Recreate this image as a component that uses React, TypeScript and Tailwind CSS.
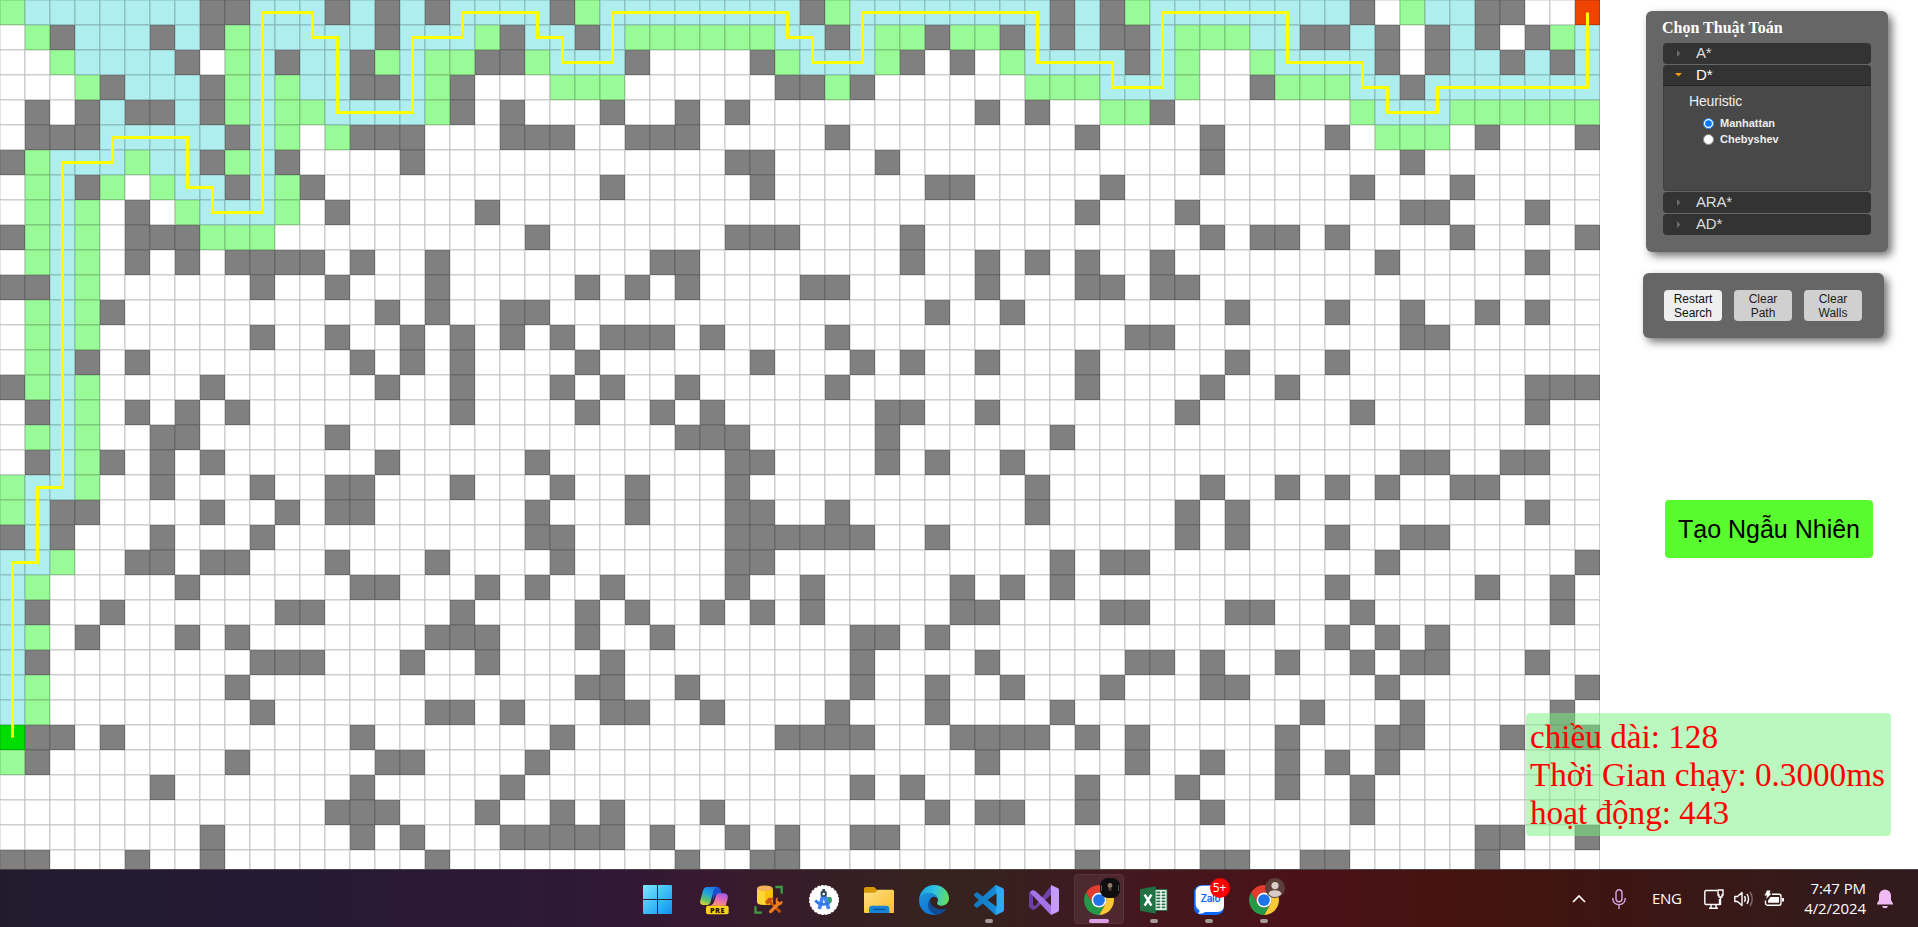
import React from "react";

const ROWS = [
  "gbbbbbbb##bbb#b#" + "b#bbbb#gbbbbbbbb" + "#gbbbbbbbb#b#gbb" + "bbbbbb#.gbb##..E",
  ".g#bbb#b#gbbbbb#" + "bbbg#bb#bggggggb" + "b#bgg#gg#b#b##bg" + "ggbb##b#.#b#.#gb",
  "..gbbbb#.gb#bb#g" + "bgg##gbbb#....#g" + "bbbg#.#.gbbbb#bg" + "..gbbbb#.#bb#b#b",
  "...g#bbb#gbgbb##" + "bg#...ggg......#" + "#g#......gggbbbg" + "..#gggbb#bbbbbbb",
  ".#.#b##b#gbggbbb" + "bg#.#...#..#.#.." + ".......#.#..gg#." + "......gbbbgggggg",
  ".###bbbbb#bg.g##" + "#...###..###...." + ".#.........#...." + "#....#.ggg.#...#",
  "#gbbbgbb#gb#...." + "#............##." + "...#............" + "#.......#.......",
  ".gb#g.gbb#bg#..." + "........#.....#." + ".....##.....#..." + "......#...#.....",
  ".gbg.#.gbbbg.#.." + "...#............" + "...........#...#" + "........##...#..",
  "#gbg.###ggg....." + ".....#.......###" + "....#..........." + "#.##.#....#....#",
  ".gbg.#.#.####.#." + ".#........##...." + "....#..#.#.#..#." + ".......#.....#..",
  "##bg......#..#.." + ".#.....#.#.#...." + "##.....#...##.##" + "................",
  ".gbg#..........#" + ".#..##.........." + ".....#..#......." + ".#...#..#..#.#..",
  ".gbg......#..#.." + "#.#.#.#.###.#..." + ".#...........##." + "........##......",
  ".gb#.#........#." + "#.#....#......#." + "..#.#..#...#...." + ".#...#..........",
  "#gbg....#......#" + "..#...#.#..#...." + ".#.........#...." + "#..#.........###",
  ".#bg.#.#.#......" + "..#....#..#.#..." + "...##..#.......#" + "......#......#..",
  ".gbg..##.....#.." + "...........###.." + "...#......#....." + "................",
  ".#bg#.#.#......#" + ".....#.......##." + "...#.#..#......." + "........##..##..",
  "gbbg..#...#..##." + "..#...#..#...#.." + ".........#......" + "#..#.#.#..##....",
  "gb##....#..#.##." + ".....#...#...##." + ".#.......#.....#" + ".#...........#..",
  "#b#...#...#....." + ".....##......###" + "###..#.........#" + ".#...#..##......",
  "bbg..##.##...#.." + ".#....#......##." + "..........#.##.." + ".......#.......#",
  "bg.....#......##" + "...#.#..#....#.." + "#.....#.#.#....." + ".....#.....#..#.",
  "b#..#......##..." + "..#....#.#..#.#." + "#.....##....##.." + ".##...#.......#.",
  "bg.#...#.#......" + ".###...#..#....." + "..##.#.........." + ".....#.#.#......",
  "b#........###..." + "#..#....#......." + "..#....#.....##." + "#..#..#.##...#..",
  "bg.......#......" + ".......##..#...." + "..#..#..#...#..." + "##.....#.......#",
  "bg........#....." + ".##.#...##..#..." + ".#...#....#....." + "....#...#.....#.",
  "S##.#.........#." + "......#........#" + "###...####.#.#.." + "...#...##...#.##",
  "g#.......#.....#" + "#....#.........." + ".......#.....#.." + "#..#.#.#........",
  "......#.......#." + "....#..........." + "..#.#......#...#" + "...#..#.........",
  ".............###" + "...#..#.#...#..." + ".....#.##..#...." + "#.....#.........",
  "........#.....#." + "#...#####.#..#.#" + "..##............" + "...........##..#",
  "##...#..#......." + ".#.........#..##" + "...........#...." + "##..##.....#....",
];

const CELL: Record<string, string> = {
  ".": "bg-white",
  "#": "bg-[#808080]",
  g: "bg-[#98fb98]",
  b: "bg-[#afeeee]",
  S: "bg-[#00dd00]",
  E: "bg-[#ee4400]",
};

const ROUTE: [number, number][] = [
  [0, 29], [0, 22], [1, 22], [1, 19], [2, 19], [2, 6], [4, 6], [4, 5], [7, 5], [7, 7],
  [8, 7], [8, 8], [10, 8], [10, 0], [12, 0], [12, 1], [13, 1], [13, 4], [16, 4], [16, 1],
  [18, 1], [18, 0], [21, 0], [21, 1], [22, 1], [22, 2], [24, 2], [24, 0], [31, 0], [31, 1],
  [32, 1], [32, 2], [34, 2], [34, 0], [41, 0], [41, 2], [44, 2], [44, 3], [46, 3], [46, 0],
  [51, 0], [51, 2], [54, 2], [54, 3], [55, 3], [55, 4], [57, 4], [57, 3], [63, 3], [63, 0],
];

function Board() {
  return (
    <div className="relative h-[869px] w-[1600px] shrink-0 overflow-hidden">
      <div className="grid grid-cols-[repeat(64,25px)] auto-rows-[25px]">
        {ROWS.flatMap((row, y) =>
          row.split("").map((c, x) => (
            <div
              key={`${x}-${y}`}
              className={`${CELL[c]} shadow-[inset_1px_1px_0_rgba(0,0,0,0.1),inset_-1px_-1px_0_rgba(0,0,0,0.19)]`}
            />
          )),
        )}
      </div>
      <svg className="absolute inset-0" width="1600" height="869">
        <polyline
          points={ROUTE.map(([x, y]) => `${x * 25 + 12.5},${y * 25 + 12.5}`).join(" ")}
          fill="none"
          stroke="#ffff00"
          strokeWidth="3"
        />
      </svg>
    </div>
  );
}

function Header({ label, open = false }: { label: string; open?: boolean }) {
  return (
    <div
      className={`flex h-[21px] items-center bg-[#333333] pl-[11px] text-[15px] leading-[20px] tracking-[-0.2px] ${
        open ? "rounded-t-[4px] border-b border-[#222222] text-white" : "rounded-[4px] text-[#dddddd]"
      }`}
    >
      <span className="flex w-[22px] pl-[1px]">
        {open ? (
          <svg width="7" height="4" viewBox="0 0 7 4">
            <path d="M0 0H7L3.5 3.6Z" fill="#ff9900" />
          </svg>
        ) : (
          <svg className="ml-[2px]" width="4" height="7" viewBox="0 0 4 7">
            <path d="M0 0V7L3.6 3.5Z" fill="#6b6b6b" />
          </svg>
        )}
      </span>
      <span className={open ? "-mt-px" : "-mt-[2px]"}>{label}</span>
    </div>
  );
}

function AlgorithmPanel() {
  return (
    <section className="ml-[46px] mt-[11px] h-[241px] w-[242px] rounded-[6px] bg-[#666666] pl-[17px] pr-[17px] shadow-[4px_4px_8px_rgba(0,0,0,0.55)]">
      <h2 className="-ml-px h-[32px] pt-[7px] font-['Liberation_Serif',serif] text-[16px] font-bold leading-[20px] text-white">
        Chọn Thuật Toán
      </h2>
      <div className="flex flex-col gap-px">
        <Header label="A*" />
        <div>
          <Header label="D*" open />
          <div className="h-[105px] rounded-b-[4px] border border-t-0 border-[#3f3f3f] bg-[#484848] pl-[25px] pt-[6px] text-[#eeeeee]">
            <h3 className="text-[14px] leading-[18px] tracking-[-0.15px]">Heuristic</h3>
            <label className="ml-[14px] mt-[5px] flex h-[16px] items-center text-[11px] font-bold">
              <input type="radio" name="heuristic" defaultChecked className="m-0 mr-[6px] size-[11px]" />
              Manhattan
            </label>
            <label className="ml-[14px] flex h-[17px] items-center text-[11px] font-bold">
              <input type="radio" name="heuristic" className="m-0 mr-[6px] size-[11px]" />
              Chebyshev
            </label>
          </div>
        </div>
        <Header label="ARA*" />
        <Header label="AD*" />
      </div>
    </section>
  );
}

function ControlPanel() {
  return (
    <section className="ml-[43px] mt-[21px] flex h-[65px] w-[241px] gap-[12px] rounded-[6px] bg-[#666666] pl-[21px] pt-[17px] shadow-[4px_4px_8px_rgba(0,0,0,0.55)]">
      <button className="h-[31px] w-[58px] rounded-[4px] bg-[#efefef] text-[12px] leading-[14px] text-[#111111]">
        Restart
        <br />
        Search
      </button>
      <button className="h-[31px] w-[58px] rounded-[4px] bg-[#d0d0d0] text-[12px] leading-[14px] text-[#1c1c1c]">
        Clear
        <br />
        Path
      </button>
      <button className="h-[31px] w-[58px] rounded-[4px] bg-[#d0d0d0] text-[12px] leading-[14px] text-[#1c1c1c]">
        Clear
        <br />
        Walls
      </button>
    </section>
  );
}

function Stats() {
  return (
    <div className="absolute left-[1526px] top-[713px] h-[123px] w-[365px] whitespace-nowrap rounded-[4px] bg-[#78f180]/50 pl-[4px] pt-[5px] font-['Liberation_Serif',serif] text-[33.2px] leading-[38px] text-[#ff0000]">
      <p>chiều dài: 128</p>
      <p>Thời Gian chạy: 0.3000ms</p>
      <p>hoạt động: 443</p>
    </div>
  );
}

function WindowsIcon() {
  return (
    <svg className="relative -left-[1.5px]" width="29" height="29" viewBox="0 0 87 87">
      <defs>
        <linearGradient id="win" x1="0" y1="0" x2="1" y2="1">
          <stop offset="0" stopColor="#7ce9fb" />
          <stop offset="0.5" stopColor="#3fbdf8" />
          <stop offset="1" stopColor="#0f93ee" />
        </linearGradient>
      </defs>
      <path d="M3 0H42V42H0V3Q0 0 3 0ZM45 0H84Q87 0 87 3V42H45ZM0 45H42V87H3Q0 87 0 84ZM45 45H87V84Q87 87 84 87H45Z" fill="url(#win)" />
    </svg>
  );
}

function CopilotIcon() {
  return (
    <svg width="30" height="30" viewBox="0 0 90 90">
      <defs>
        <linearGradient id="cpl" x1="0.6" y1="0" x2="0.2" y2="1">
          <stop offset="0" stopColor="#1b7fe8" />
          <stop offset="0.4" stopColor="#25a8d8" />
          <stop offset="0.7" stopColor="#5cc26a" />
          <stop offset="1" stopColor="#e8d33a" />
        </linearGradient>
        <linearGradient id="cpr" x1="0.7" y1="0" x2="0.3" y2="1">
          <stop offset="0" stopColor="#a05be8" />
          <stop offset="0.5" stopColor="#e36ab4" />
          <stop offset="1" stopColor="#ff9a6a" />
        </linearGradient>
      </defs>
      <path d="M38 5H54Q62 5 65 14L69 26H58Q50 26 47 34L42 48Z" fill="#1c4fd0" />
      <path d="M24 6H54Q46 8 43 19L35 50Q32 60 22 60H12Q1 59 4 46L12 17Q15 6 24 6Z" fill="url(#cpl)" />
      <path d="M60 25H76Q89 27 86 41L80 62H34Q42 60 46 48L50 35Q53 25 60 25Z" fill="url(#cpr)" />
      <rect x="21" y="62" width="68" height="26" rx="6" fill="#fdd116" />
      <text x="55.5" y="82.5" textAnchor="middle" fontFamily="Open Sans, sans-serif" fontWeight="800" fontSize="22" letterSpacing="1.5" fill="#1c1400">
        PRE
      </text>
    </svg>
  );
}

function SqlToolsIcon() {
  return (
    <svg width="30" height="30" viewBox="0 0 90 90">
      <path d="M9 11V51Q9 60 33 60Q56 60 56 51V11Z" fill="#fdd835" />
      <path d="M33 11H56V51Q56 60 33 60Z" fill="#ffc107" />
      <ellipse cx="32.500" cy="10" rx="23.500" ry="8.500" fill="#f3b15a" />
      <path d="M64 6H83V26" fill="none" stroke="#3f9a45" strokeWidth="7" />
      <path d="M4.500 64V83H24" fill="none" stroke="#3f9a45" strokeWidth="7" />
      <path d="M33 51L44 38L60 38L56 46L52 49L82 79L76 85L46 54L40 59Z" fill="#c9530c" />
      <path d="M72 36L70 46L76 51L86 48Q86 60 74 62L52 85Q44 85 45 78L66 56Q62 40 72 36Z" fill="#ee7d22" />
    </svg>
  );
}

function AndroidStudioIcon() {
  return (
    <svg width="30" height="30" viewBox="0 0 90 90">
      <circle cx="45" cy="45" r="43" fill="#ffffff" stroke="#ffffff" strokeWidth="4" strokeDasharray="8 3.3" />
      <path d="M54 36L66 36Q72 46 66 54L56 56Z" fill="#34a06a" />
      <path d="M44 22L31 72M44 22L59 72" stroke="#4285f4" strokeWidth="11" />
      <path d="M19 46Q34 65 62 54" fill="none" stroke="#3478f0" strokeWidth="8" />
      <circle cx="44" cy="26" r="9.500" fill="#33475b" />
      <path d="M40 12H48V22H40Z" fill="#33475b" />
      <circle cx="44" cy="27" r="4" fill="#ffffff" />
    </svg>
  );
}

function FolderIcon() {
  return (
    <svg width="30" height="30" viewBox="0 0 90 90">
      <defs>
        <linearGradient id="fold" x1="0" y1="0" x2="1" y2="1">
          <stop offset="0" stopColor="#ffe083" />
          <stop offset="1" stopColor="#fbbc2c" />
        </linearGradient>
      </defs>
      <path d="M0 12Q0 6 6 6H30L40 15H60V40H0Z" fill="#d69a0c" />
      <path d="M0 23H33L42 14H86Q90 14 90 19V84H4Q0 84 0 80Z" fill="url(#fold)" />
      <path d="M15 84V72Q15 62 25 62H66Q76 62 76 72V84Z" fill="#1683d8" />
      <path d="M30 73H62" stroke="#0b4f92" strokeWidth="4" strokeLinecap="round" />
    </svg>
  );
}

function EdgeIcon() {
  return (
    <svg width="30" height="30" viewBox="0 0 90 90">
      <defs>
        <linearGradient id="edt" x1="0" y1="0.3" x2="1" y2="0.5">
          <stop offset="0" stopColor="#1b9de2" />
          <stop offset="0.5" stopColor="#2fc4df" />
          <stop offset="1" stopColor="#63dd62" />
        </linearGradient>
        <linearGradient id="edb" x1="0" y1="0" x2="0.6" y2="1">
          <stop offset="0" stopColor="#1a95dd" />
          <stop offset="1" stopColor="#1173cf" />
        </linearGradient>
      </defs>
      <path d="M0 46C4 30 16 24 30 24C44 24 56 32 57 42C50 33 38 34 34 42C26 58 38 78 62 82C56 88 50 90 44 90C18 90 0 70 0 46Z" fill="url(#edb)" />
      <path d="M33 42C22 56 26 82 52 89C66 88 78 80 84 69C76 74 66 74 58 72C42 68 32 56 33 42Z" fill="#114b93" />
      <path d="M0 44C2 18 22 0 45 0C70 0 90 18 90 40C90 54 80 62 68 62C58 62 53 58 54 54C59 48 58 36 48 29C32 19 8 24 0 44Z" fill="url(#edt)" />
    </svg>
  );
}

function VSCodeIcon() {
  return (
    <svg width="30" height="30" viewBox="0 0 24 24">
      <defs>
        <linearGradient id="vsc" x1="0" y1="0" x2="1" y2="0">
          <stop offset="0" stopColor="#1479c0" />
          <stop offset="0.7" stopColor="#1787d2" />
          <stop offset="0.76" stopColor="#2aa8f2" />
          <stop offset="1" stopColor="#2badf5" />
        </linearGradient>
      </defs>
      <path
        fill="url(#vsc)"
        d="M23.15 2.587L18.21.21a1.494 1.494 0 0 0-1.705.29l-9.46 8.63-4.12-3.128a.999.999 0 0 0-1.276.057L.327 7.261A1 1 0 0 0 .326 8.74L3.899 12 .326 15.26a1 1 0 0 0 .001 1.479L1.65 17.94a.999.999 0 0 0 1.276.057l4.12-3.128 9.46 8.63a1.492 1.492 0 0 0 1.704.29l4.942-2.377A1.5 1.5 0 0 0 24 20.06V3.939a1.5 1.5 0 0 0-.85-1.352zm-5.146 14.861L10.826 12l7.178-5.448v10.896z"
      />
    </svg>
  );
}

function VisualStudioIcon() {
  return (
    <svg width="30" height="30" viewBox="0 0 90 90">
      <path d="M0 24L10 16L20 22L12 32V58L20 66L10 74L0 66Z" fill="#6a3fa0" />
      <path d="M10 74L68 0V28L26 66Q18 76 10 74Z" fill="#6f44a8" />
      <path d="M10 16Q18 14 26 24L68 64V90L62 86L2 22Z" fill="#a673e6" />
      <path d="M66 0L86 9Q90 11 90 15V75Q90 79 86 81L66 90Z" fill="#c79bfb" />
    </svg>
  );
}

function ChromeIcon() {
  const arm = "M3.2154 12A24 24 0 0 1 44.7846 12H24A12 12 0 0 0 13.6077 30Z";
  return (
    <svg width="30" height="30" viewBox="0 0 48 48">
      <path d={arm} fill="#e33b2e" />
      <path d={arm} fill="#fcc934" transform="rotate(120 24 24)" />
      <path d={arm} fill="#229a48" transform="rotate(240 24 24)" />
      <circle cx="24" cy="24" r="12" fill="#ffffff" />
      <circle cx="24" cy="24" r="9.4" fill="#1f73e8" />
    </svg>
  );
}

function ExcelIcon() {
  return (
    <svg width="30" height="30" viewBox="0 0 90 90">
      <rect x="44" y="14" width="40" height="62" fill="#ffffff" stroke="#207245" strokeWidth="3" />
      {[22, 31, 40, 49, 58, 67].map((y) => (
        <path key={y} d={`M52 ${y}H64M68 ${y}H79`} stroke="#207245" strokeWidth="5" />
      ))}
      <path d="M3 13L50 4V86L3 77Z" fill="#207245" />
      <path d="M17 29L37 62M37 29L17 62" stroke="#ffffff" strokeWidth="7.5" />
    </svg>
  );
}

function ZaloIcon() {
  return (
    <svg width="30" height="30" viewBox="0 0 90 90">
      <rect width="90" height="90" rx="22" fill="#0a68ff" />
      <path d="M24 2H70Q90 2 90 22V60Q90 81 70 81H34Q24 88 12 86Q18 82 16 76Q5 68 5 56V22Q5 2 24 2Z" fill="#ffffff" />
      <text x="49" y="51" textAnchor="middle" fontFamily="Inter, sans-serif" fontWeight="600" fontSize="30" letterSpacing="-1" fill="#0a68ff">
        Zalo
      </text>
    </svg>
  );
}

type App = { name: string; icon: React.ReactNode; mark?: "idle" | "active"; badge?: React.ReactNode };

const APPS: App[] = [
  { name: "start", icon: <WindowsIcon /> },
  { name: "copilot", icon: <CopilotIcon /> },
  { name: "sql", icon: <SqlToolsIcon /> },
  { name: "android", icon: <AndroidStudioIcon /> },
  { name: "files", icon: <FolderIcon /> },
  { name: "edge", icon: <EdgeIcon /> },
  { name: "code", icon: <VSCodeIcon />, mark: "idle" },
  { name: "vs", icon: <VisualStudioIcon /> },
  {
    name: "chrome",
    icon: <ChromeIcon />,
    mark: "active",
    badge: (
      <svg width="20" height="20" viewBox="0 0 20 20">
        <rect width="20" height="20" rx="8" fill="#0e0e10" />
        <circle cx="10" cy="7.5" r="2.4" fill="#9a7868" />
        <path d="M8 10H12L11 13H9Z" fill="#4a3a34" />
        <path d="M1.5 7V13M18.5 7V13" stroke="#555555" />
      </svg>
    ),
  },
  { name: "excel", icon: <ExcelIcon />, mark: "idle" },
  {
    name: "zalo",
    icon: <ZaloIcon />,
    mark: "idle",
    badge: (
      <span className="flex size-[20px] items-center justify-center rounded-full bg-[#ff0000] font-['Open_Sans',sans-serif] text-[12px] leading-none text-white">
        5+
      </span>
    ),
  },
  {
    name: "chrome-guest",
    icon: <ChromeIcon />,
    mark: "idle",
    badge: (
      <svg width="20" height="20" viewBox="0 0 20 20">
        <circle cx="10" cy="10" r="10" fill="#5b403a" />
        <circle cx="10" cy="7.6" r="3.6" fill="#d8ccc8" />
        <path d="M3.5 16Q4 12.2 10 12.2T16.5 16Q14 19 10 19T3.5 16Z" fill="#d8ccc8" />
      </svg>
    ),
  },
];

function Taskbar() {
  return (
    <footer className="flex h-[58px] border-t border-[#4b4145] bg-[linear-gradient(90deg,#201c2e_0%,#241a33_12%,#2e1838_30%,#38192f_37%,#36221f_48%,#35221f_51%,#42181f_58%,#4a1218_68%,#451310_76%,#3c1512_84%,#361a1a_93%,#311a1d_100%)] font-['Open_Sans','Noto_Sans',sans-serif] text-white">
      <div className="flex pl-[631px]">
        {APPS.map((app) => (
          <div key={app.name} className="flex w-[55px] justify-center pt-[4px]">
            <div
              className={`relative flex h-[50px] w-[50px] flex-col items-center rounded-[4px] pt-[11px] ${
                app.mark === "active" ? "bg-white/7 outline outline-1 -outline-offset-1 outline-white/5" : ""
              }`}
            >
              {app.icon}
              {app.badge && <span className="absolute left-[26px] top-[4px]">{app.badge}</span>}
              {app.mark && (
                <span
                  className={`mt-[4px] h-[4px] shrink-0 rounded-full ${
                    app.mark === "active" ? "w-[20px] bg-[#dd9fe6]" : "w-[8px] bg-[#a39a9a]"
                  }`}
                />
              )}
            </div>
          </div>
        ))}
      </div>
      <div className="ml-auto flex items-center pr-[25px]">
        <svg width="14" height="8" viewBox="0 0 14 8" fill="none" stroke="white" strokeWidth="1.7">
          <path d="M1 7L7 1L13 7" />
        </svg>
        <svg className="ml-[26px]" width="14" height="20" viewBox="0 0 14 20" fill="none" stroke="#dba6e4" strokeWidth="1.4">
          <rect x="4" y="0.8" width="6" height="12" rx="3" />
          <path d="M0.8 9Q0.8 15.6 7 15.6T13.2 9M7 15.6V20" />
        </svg>
        <span className="ml-[26px] w-[30px] text-[15px] leading-none tracking-[-0.3px]">ENG</span>
        <svg className="ml-[22px]" width="20" height="20" viewBox="0 0 20 20" fill="none" stroke="white" strokeWidth="1.4">
          <path d="M13 1.5H2Q0.8 1.5 0.8 3V14Q0.8 15.5 2 15.5H15.5V10M5 19.3H14M7 15.5V19M12 15.5V19" />
          <path d="M14 1H19V6H18V8H15V6H14Z M16.5 8V16" />
        </svg>
        <svg className="ml-[10px]" width="20" height="18" viewBox="0 0 20 18" fill="none" stroke="white" strokeWidth="1.4" strokeLinejoin="round">
          <path d="M0.8 6.5H3.5L8 2.5V15.5L3.5 11.5H0.8Z" />
          <path d="M10.5 6.2Q12.2 9 10.5 11.8M13 4Q16 9 13 14" />
          <path d="M16 2Q20.5 9 16 16" opacity="0.35" />
        </svg>
        <svg className="ml-[10px]" width="20" height="18" viewBox="0 0 20 18" fill="none" stroke="white" strokeWidth="1.4">
          <path d="M8 4.2H15Q17 4.2 17 6.2V13Q17 15.2 15 15.2H3.5Q1.5 15.2 1.5 13V10.5" />
          <path d="M6.5 7H15V12.8H4V10.5Z" fill="white" stroke="none" />
          <path d="M18 8H20V11.5H18Z" fill="white" stroke="none" />
          <path d="M3 0.5H6.5L5.5 3.5H7.5L2.2 9L3 5.6H0.5Z" fill="white" stroke="none" />
        </svg>
        <div className="w-[82px] pb-[2px] text-right text-[15px] leading-[20px] tracking-[-0.08px]">
          <p>7:47 PM</p>
          <p>4/2/2024</p>
        </div>
        <svg className="ml-[11px]" width="16" height="20" viewBox="0 0 16 20" fill="#f0bbf5">
          <path d="M8 0.5Q14 1 14 7.5V11L16 14.5V15.5H0V14.5L2 11V7.5Q2 1 8 0.5ZM5 17H11Q10.5 19.3 8 19.3T5 17Z" />
        </svg>
      </div>
    </footer>
  );
}

export default function App() {
  return (
    <div className="relative flex h-[927px] w-[1918px] flex-col overflow-hidden bg-white font-['Liberation_Sans',Arial,sans-serif]">
      <main className="flex h-[869px] shrink-0">
        <Board />
        <aside className="flex w-[318px] flex-col">
          <AlgorithmPanel />
          <ControlPanel />
          <button className="ml-[65px] mt-[162px] h-[58px] w-[208px] rounded-[4px] bg-[#58fb2d] pt-[2px] text-[25px] text-black">
            Tạo Ngẫu Nhiên
          </button>
        </aside>
      </main>
      <Stats />
      <Taskbar />
    </div>
  );
}
